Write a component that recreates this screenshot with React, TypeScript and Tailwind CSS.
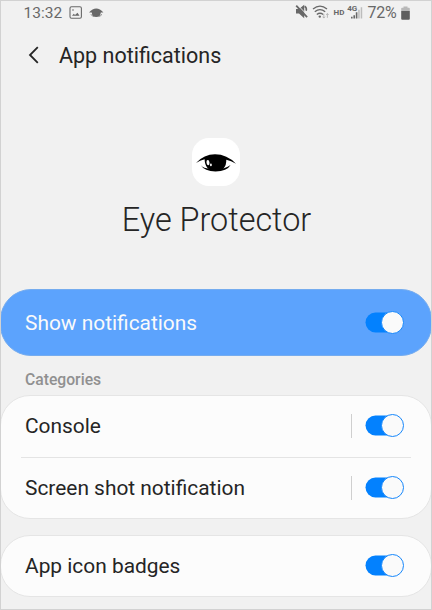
import React from "react";

function Toggle() {
  return (
    <svg className="block h-6 w-10 shrink-0" viewBox="0 0 40 24" role="switch" aria-checked="true">
      <rect x="0.5" y="1.5" width="37" height="20" rx="10" fill="#0381fe" />
      <circle cx="27.5" cy="11.5" r="11" fill="#fafafa" stroke="#1687fb" />
    </svg>
  );
}

function StatusBar() {
  return (
    <div className="flex h-[23px] items-center pl-[22.5px] text-[#686868]">
      <span className="w-[45.5px] pt-px text-[15.5px] leading-6">13:32</span>
      <svg className="h-[13px] w-[14px]" viewBox="0 0 14 13" fill="none" stroke="currentColor" strokeWidth="1.1">
        <rect x="1" y="0.7" width="11.4" height="11.5" rx="1.5" />
        <circle cx="4" cy="4" r="0.8" fill="currentColor" stroke="none" />
        <path d="M3 9.8 L4.8 7.8 L6 9 L8.5 6.8 L10.5 9.8Z" fill="currentColor" stroke="none" />
      </svg>
      <svg className="ml-[6px] h-[10px] w-[15px]" viewBox="0 0 15 10" fill="currentColor">
        <path d="M0 4.6 Q3.5 0.6 7.2 0.6 Q11 0.6 14.4 4.6 L11.8 4.4 Q11.4 9 7.2 9 Q3 9 2.8 4.4Z" />
        <path d="M1.8 6 Q3 8.6 5 8.6 M12.8 6 Q12 8.6 9.6 8.6" fill="none" stroke="currentColor" strokeWidth="0.6" />
      </svg>
      <svg className="ml-auto h-[20px] w-[76px]" viewBox="292 4.2 76 20" fill="currentColor">
        <path d="M295 10.2h3l5.2-4.2v13.4l-5.2-4.8h-3z" />
        <path d="M303.6 7.4q2.4 1.4 1.6 4.6" fill="none" stroke="currentColor" strokeWidth="1.6" />
        <path d="M296.6 6.2l10 10.4" stroke="#f1f1f1" strokeWidth="1" />
        <path d="M295.2 6.8l10.9 11.6" fill="none" stroke="currentColor" strokeWidth="1.8" />
        <g fill="none" stroke="currentColor" strokeWidth="1.35">
          <path d="M312 10.2q7-5.8 14 0M313.8 13q5.2-4.3 10.4 0M315.8 15.7q3.2-2.5 6.4 0" />
        </g>
        <circle cx="318.8" cy="17.8" r="1.2" />
        <path d="M322.8 15v4.2m-1.2-1.3 1.2 1.4 1.2-1.4M326.4 19v-4.2m-1.2 1.3 1.2-1.4 1.2 1.4" fill="none" stroke="#aaa" strokeWidth="0.8" />
        <text x="332.6" y="16.7" className="text-[8px] font-bold">HD</text>
        <text x="346.2" y="12.7" className="text-[8px] font-bold">4G</text>
        <path d="M350 18h1.6v1.8H350zM352.4 16.4h1.6v3.4h-1.6zM354.8 13.5h1.6v6.3h-1.6z" />
        <path d="M357.2 11h1.5v8.8h-1.5zM359.7 8.5h1.5v11.3h-1.5z" fill="#bcbcbc" />
      </svg>
      <span className="-ml-[1.5px] w-[33.5px] pt-px text-[16px] leading-6 tracking-[-0.3px]">72%</span>
      <svg className="mr-[21px] h-[14px] w-[9px]" viewBox="0 0 9 14">
        <path d="M2.5 1.7V0.5h4v1.2H8q.8 0 .8.8V5H.2V2.5q0-.8.8-.8z" fill="#b8b8b8" />
        <path d="M.2 5h8.6v7.7q0 1-1 1H1.2q-1 0-1-1z" fill="#5e5e5e" />
      </svg>
    </div>
  );
}

function Row({ label, separator = false }: { label: string; separator?: boolean }) {
  return (
    <div className="flex h-[60px] items-center pr-[26px] pl-6">
      <span className="mr-auto text-[20.9px] leading-6 text-[#252525]">{label}</span>
      {separator && <span className="mr-[13px] h-6 w-px bg-[#cfcfcf]" />}
      <Toggle />
    </div>
  );
}

export default function App() {
  return (
    <div className="h-[610px] w-[432px] overflow-hidden border border-[#d2d2d2] bg-[#f1f1f1] font-['Roboto','Liberation_Sans',sans-serif]">
      <StatusBar />
      <header className="flex h-[62px] items-center pl-[26px]">
        <svg className="h-[18px] w-3" viewBox="0 0 12 18" fill="none" stroke="#252525" strokeWidth="1.8">
          <path d="M10.8 1.2 3 9l7.8 7.8" />
        </svg>
        <h1 className="ml-5 pt-px text-[21.5px] leading-7 text-[#252525]">App notifications</h1>
      </header>
      <section className="flex h-[203px] flex-col items-center pt-[52px]">
        <svg className="h-12 w-12" viewBox="0 0 48 48">
          <rect width="48" height="48" rx="17" fill="#fff" />
          <path d="M4 25 Q12 16.3 23 16.3 Q35 16.3 44 25.8 Q39 22.6 34.3 21.8 Q34.5 33 23.5 33 Q13 33 12.6 21.3 Q8 22.2 4 25Z" />
          <path d="M8.8 27.3 Q12 30.5 17 30.5 L32 30.2 Q36 29 38.6 27 Q35 33.4 23.5 33.4 Q12.5 33.4 8.8 27.3Z" />
          <ellipse cx="16" cy="24.6" rx="1.5" ry="2.6" fill="#fff" transform="rotate(-8 16 24.6)" />
          <ellipse cx="18.9" cy="26.9" rx="0.9" ry="1.4" fill="#fff" />
        </svg>
        <h2 className="mt-[14px] pl-px text-[32.4px] leading-10 font-light text-[#252525]">Eye Protector</h2>
      </section>
      <main className="-mx-px">
        <div className="flex h-[67px] items-center rounded-[31px] border border-[#75acef] bg-[#5ca3fd] pr-[26px] pl-6">
          <span className="mr-auto text-[20.9px] leading-6 text-[#fafafa]">Show notifications</span>
          <Toggle />
        </div>
        <div className="flex h-[39px] items-center pt-2 pl-[25px] text-[15.7px] font-medium text-[#909090]">Categories</div>
        <div className="rounded-[30px] border border-[#e5e5e5] bg-[#fcfcfc]">
          <Row label="Console" separator />
          <div className="mx-5 mt-px h-px bg-[#e4e4e4]" />
          <Row label="Screen shot notification" separator />
        </div>
        <div className="mt-4 rounded-[30px] border border-[#e5e5e5] bg-[#fcfcfc]">
          <Row label="App icon badges" />
        </div>
      </main>
    </div>
  );
}
